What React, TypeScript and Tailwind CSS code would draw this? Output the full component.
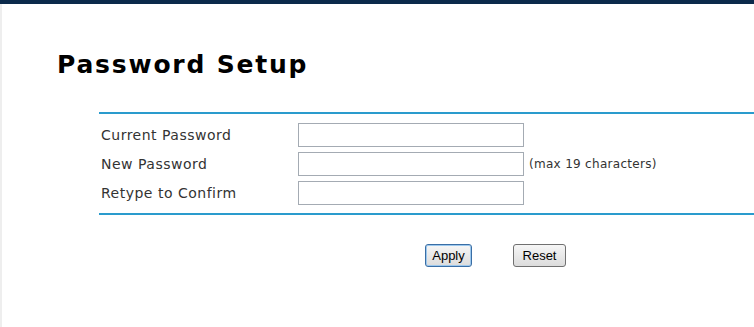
export default function App() {
  const rows = [
    { label: "Current Password", hint: "" },
    { label: "New Password", hint: "(max 19 characters)" },
    { label: "Retype to Confirm", hint: "" },
  ];

  return (
    <div className="w-[754px] h-[327px] bg-white overflow-hidden [font-family:'DejaVu_Sans',Verdana,sans-serif]">
      {/* top bar */}
      <div className="h-[4px] bg-[#0b2a4b]" />
      <div className="h-[323px] border-l-2 border-[#eeeeee] flex flex-col">
        <h1 className="ml-[55px] mt-[46px] text-[25px] leading-[30px] tracking-[1.8px] font-bold text-black">
          Password Setup
        </h1>

        {/* form table */}
        <div className="ml-[97px] mt-[32px] border-y-2 border-[#2a9bcd] pt-[9px] pb-[8px]">
          <div className="grid grid-cols-[199px_226px_1fr] gap-y-[5px]">
            {rows.map((row, index) => (
              <div key={index} className="contents">
                <div className="h-[24px] pl-[2px] flex items-center text-[14px] tracking-[0.5px] text-[#333333]">
                  {row.label}
                </div>
                <input
                  type="password"
                  className="h-[24px] w-[226px] border border-[#a4abb3] bg-white outline-none"
                />
                <div className="h-[24px] pl-[5px] flex items-center text-[12px] tracking-[0.3px] text-[#333333]">
                  {row.hint}
                </div>
              </div>
            ))}
          </div>
        </div>

        {/* buttons */}
        <div className="ml-[423px] mt-[29px] flex gap-[41px] [font-family:'Liberation_Sans',Arial,sans-serif] text-[13px] text-black">
          <button className="h-[23px] w-[47px] rounded-[3px] border border-[#3a6ea5] bg-gradient-to-b from-[#f6f6f6] to-[#dcdcdc] shadow-[inset_0_0_0_1px_#9cc8ee]">
            Apply
          </button>
          <button className="h-[23px] w-[53px] rounded-[3px] border border-[#707070] bg-gradient-to-b from-[#f6f6f6] to-[#dcdcdc]">
            Reset
          </button>
        </div>
      </div>
    </div>
  );
}
